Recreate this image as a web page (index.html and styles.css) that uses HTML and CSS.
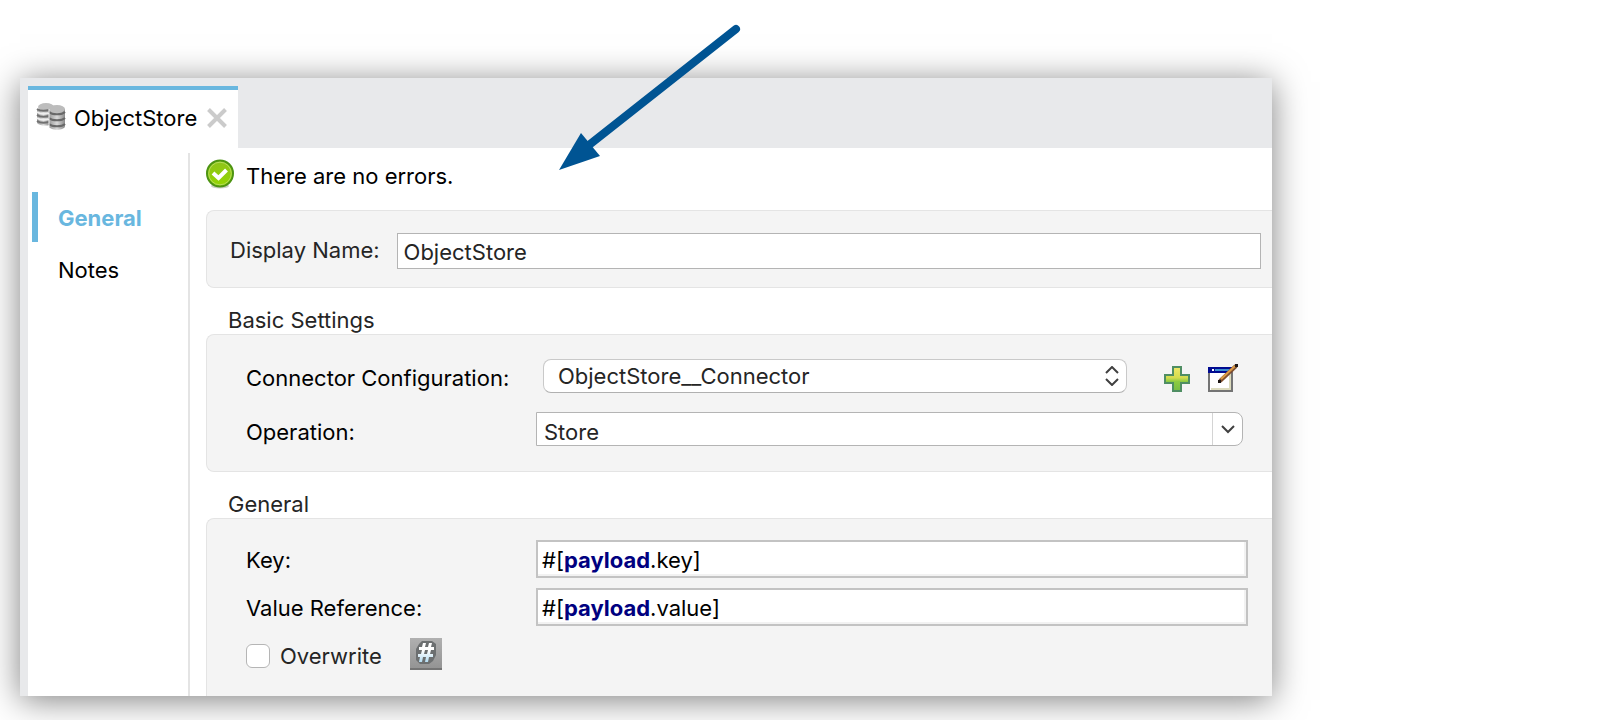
FILE: index.html
```html
<!DOCTYPE html>
<html lang="en">
<head>
<meta charset="utf-8">
<title>ObjectStore</title>
<link rel="stylesheet" href="styles.css">
</head>
<body>
<main class="window">
  <header class="tabs">
    <div class="tab">
      <svg class="tab-icon" viewBox="0 0 30 28" aria-hidden="true">
        <defs>
          <linearGradient id="metal"><stop offset="0" stop-color="#999"/><stop offset=".5" stop-color="#d8d8d8"/><stop offset="1" stop-color="#8a8a8a"/></linearGradient>
        </defs>
        <path d="M1 7v14c3 3 9 3 13 2V7z" fill="url(#metal)"/>
        <ellipse cx="10" cy="5" rx="8" ry="4" fill="#bdbdbd"/>
        <path d="M1 7c3 2 8 2 12 1M1 13c3 2 8 2 12 1M1 19c3 2 8 2 12 1" fill="none" stroke="#707070" stroke-width="2"/>
        <path d="M1 10c3 2 8 2 12 1M1 16c3 2 8 2 12 1" fill="none" stroke="#eee" stroke-width="2"/>
        <path d="M13 7v17c0 5 16 5 16 0V7z" fill="url(#metal)"/>
        <ellipse cx="21" cy="7" rx="8" ry="4" fill="#bcbcbc"/>
        <path d="M13 10c3 3 13 3 16 0M13 16c3 3 13 3 16 0M13 22c3 3 13 3 16 0" fill="none" stroke="#686868" stroke-width="2"/>
        <path d="M13 7v18" stroke="#f4f4f4" stroke-width="1"/>
      </svg>
      <span>ObjectStore</span>
      <button class="close" type="button" aria-label="Close tab">
        <svg viewBox="0 0 20 20" aria-hidden="true"><path d="M1.500 1.500l17 17M18.500 1.500l-17 17" stroke="#cbcbcb" stroke-width="4"/></svg>
      </button>
    </div>
  </header>
  <div class="body">
    <nav class="side">
      <a class="side-link active" href="#general">General</a>
      <a class="side-link" href="#notes">Notes</a>
    </nav>
    <form class="content">
      <div class="status">
        <svg class="status-icon" viewBox="0 0 28 30" aria-hidden="true">
          <defs><linearGradient id="ok" x2="0" y2="1"><stop offset="0" stop-color="#8fc31c"/><stop offset="1" stop-color="#93d600"/></linearGradient></defs>
          <ellipse cx="14" cy="27" rx="9" ry="2.500" fill="#c9cfc4"/>
          <circle cx="14" cy="14.500" r="13" fill="url(#ok)" stroke="#4d9412" stroke-width="2"/>
          <circle cx="14" cy="14.500" r="11.300" fill="none" stroke="#b5dc5c" stroke-width="1"/>
          <path d="M7 14l5.500 5 8-8" fill="none" stroke="#fff" stroke-width="4"/>
        </svg>
        <span>There are no errors.</span>
      </div>

      <section class="panel name-panel">
        <label for="display-name">Display Name:</label>
        <input id="display-name" class="field" type="text" value="ObjectStore">
      </section>

      <h2>Basic Settings</h2>
      <section class="panel basic-panel">
        <div class="row config-row">
          <label for="config">Connector Configuration:</label>
          <div class="config">
            <div class="select-wrap popup">
              <select id="config"><option>ObjectStore__Connector</option></select>
              <svg class="updown" viewBox="0 0 14 20" aria-hidden="true"><path d="M1 7l6-6 6 6M1 13l6 6 6-6"/></svg>
            </div>
            <button class="icon-button" type="button" aria-label="Add configuration">
              <svg width="26" height="26" viewBox="0 0 26 26" aria-hidden="true">
                <defs><linearGradient id="add" x2="0" y2="1"><stop offset="0" stop-color="#f0e868"/><stop offset=".45" stop-color="#d3dc4e"/><stop offset=".6" stop-color="#8dcb42"/><stop offset="1" stop-color="#76bd44"/></linearGradient></defs>
                <path d="M9 1h8v8h8v8h-8v8H9v-8H1V9h8z" fill="url(#add)" stroke="#4f8e63" stroke-width="2"/>
              </svg>
            </button>
            <button class="icon-button edit" type="button" aria-label="Edit configuration">
              <svg width="32" height="30" viewBox="0 0 32 30" aria-hidden="true">
                <path d="M2 5h23v23H2z" fill="#fff" stroke="#747474" stroke-width="2"/>
                <path d="M4 26h19V11" fill="none" stroke="#dcdbbd" stroke-width="2"/>
                <path d="M1 4h24v6H1z" fill="#000a90"/>
                <path d="M8 7h16" stroke="#3d8fd0" stroke-width="2"/>
                <path d="M5 6h2v2H5z" fill="#fff"/>
                <path d="M13 18L29 3" stroke="#805030" stroke-width="4"/>
                <path d="M14 16L28 3" stroke="#dc9c46" stroke-width="2"/>
                <path d="M11 17h3v3h-3zM28 1h3v3h-3z" fill="#1d1715"/>
              </svg>
            </button>
          </div>
        </div>
        <div class="row operation-row">
          <label for="operation">Operation:</label>
          <div class="select-wrap combo">
            <select id="operation"><option>Store</option></select>
            <span class="combo-cap"><svg viewBox="0 0 14 9" aria-hidden="true"><path d="M1 1l6 6 6-6"/></svg></span>
          </div>
        </div>
      </section>

      <h2>General</h2>
      <section class="panel general-panel">
        <div class="row expression-row">
          <span id="key-label">Key:</span>
          <div class="expression" contenteditable="true" role="textbox" aria-labelledby="key-label" spellcheck="false">#[<b>payload</b>.key]</div>
        </div>
        <div class="row expression-row">
          <span id="value-label">Value Reference:</span>
          <div class="expression" contenteditable="true" role="textbox" aria-labelledby="value-label" spellcheck="false">#[<b>payload</b>.value]</div>
        </div>
        <div class="check-row">
          <input id="overwrite" type="checkbox">
          <label for="overwrite">Overwrite</label>
          <button class="hash" type="button" aria-label="Use expression">
            <svg viewBox="0 0 32 32" aria-hidden="true">
              <defs><linearGradient id="sign" x2="0" y2="1"><stop offset=".4" stop-color="#fff"/><stop offset="1" stop-color="#b4dcf2"/></linearGradient></defs>
              <path d="M12 3h10l4 3v11l-3 6-4 3h-9l-4-4V11l3-5z" fill="#6c6f70"/>
              <path d="M13 5h3l-1 4h3l1-4h3l-1 4h3v3h-3l-1 4h3v3h-4l-1 5h-3l1-5h-3l-1 5H9l1-5H8v-3h3l1-4H9V9h3zM15 12l-1 4h3l1-4z" fill="url(#sign)"/>
            </svg>
          </button>
        </div>
      </section>
    </form>
  </div>
  <svg class="arrow" viewBox="0 0 184 148" aria-hidden="true">
    <path d="M30 122L177 6" stroke="#005493" stroke-width="8" stroke-linecap="round"/>
    <path d="M0 147L22 110L41 133z" fill="#005493"/>
  </svg>
</main>
</body>
</html>
```

FILE: styles.css
```css
* {
  box-sizing: border-box;
}

body {
  margin: 0;
  background: #fff;
  color: #000;
  font: 22px/28px Inter, "Liberation Sans", sans-serif;
}

input,
select,
button {
  margin: 0;
  padding: 0;
  border: 0;
  color: inherit;
  font: inherit;
}

button {
  background: none;
}

svg {
  display: block;
}

.window {
  position: relative;
  display: flex;
  flex-direction: column;
  min-height: calc(100vh - 102px);
  margin: 78px 334px 24px 20px;
  padding-left: 8px;
  background: #e8e9eb;
  box-shadow: 0 4px 32px rgba(0, 0, 0, 0.5);
}

.tabs {
  display: flex;
  height: 70px;
  padding-top: 8px;
}

.tab {
  display: flex;
  align-items: center;
  padding: 0 11px 2px 8px;
  border-top: 4px solid #69b7df;
  background: #fff;
}

.tab-icon {
  width: 30px;
  height: 28px;
  margin: 0 8px 4px 0;
}

.close {
  margin-left: 10px;
}

.close svg {
  width: 20px;
  height: 20px;
}

.body {
  display: flex;
  flex: 1;
  padding-top: 5px;
  background: #fff;
}

.side {
  display: flex;
  flex-direction: column;
  width: 162px;
  padding: 39px 0 0 4px;
  border-right: 2px solid #e4e4e4;
}

.side-link {
  padding: 14px 0 12px 26px;
  color: #000;
  text-decoration: none;
}

.side-link.active {
  padding: 12px 0 10px 20px;
  border-left: 6px solid #69b7df;
  color: #69b7df;
  font-weight: 700;
}

.content {
  display: flex;
  flex: 1;
  flex-direction: column;
  min-width: 0;
  padding: 6px 0 0 16px;
}

.status {
  display: flex;
  gap: 12px;
}

.status-icon {
  width: 28px;
  height: 30px;
}

.status span {
  padding-top: 3px;
}

.panel {
  border: 1px solid #e4e4e4;
  border-right: 0;
  border-radius: 8px 0 0 8px;
  background: #f4f4f4;
}

.name-panel {
  display: flex;
  gap: 17px;
  margin-top: 20px;
  padding: 22px 11px 18px 23px;
  color: #252525;
}

.name-panel label {
  padding-top: 3px;
}

.field {
  flex: 1;
  min-width: 0;
  height: 36px;
  padding: 1px 6px 0;
  border: 1px solid #b4b4b4;
  background: #fff;
}

h2 {
  margin: 18px 0 0;
  padding-left: 22px;
  color: #252525;
  font-size: 22px;
  font-weight: 400;
  line-height: 28px;
}

.row {
  display: grid;
  grid-template-columns: 290px 1fr;
}

.basic-panel {
  padding: 24px 29px 25px 39px;
}

.config-row label {
  padding-top: 5px;
}

.config {
  display: flex;
  align-items: flex-start;
  padding: 0 4px 0 7px;
}

.select-wrap {
  position: relative;
  display: flex;
  color: #252525;
}

select {
  flex: 1;
  min-width: 0;
  appearance: none;
  background: transparent;
}

.popup {
  flex: 1;
  height: 34px;
  border: 1px solid #c9c9c9;
  border-bottom-color: #b0b0b0;
  border-radius: 8px;
  background: #fff;
}

.popup select {
  padding: 0 32px 0 14px;
}

.select-wrap svg {
  fill: none;
  stroke: #404040;
  stroke-width: 2;
}

.updown {
  position: absolute;
  top: 6px;
  right: 7px;
  width: 14px;
  height: 20px;
  pointer-events: none;
}

.icon-button {
  margin: 7px 0 0 37px;
}

.icon-button.edit {
  margin: 4px 0 0 17px;
}

.operation-row {
  margin-top: 19px;
}

.operation-row label {
  padding-top: 6px;
}

.combo {
  height: 34px;
  border: 1px solid #b4b4b4;
  border-radius: 0 8px 8px 0;
  background: #fff;
}

.combo select {
  padding: 5px 36px 0 7px;
}

.combo-cap {
  position: absolute;
  top: 0;
  right: 0;
  bottom: 0;
  display: grid;
  width: 30px;
  border-left: 1px solid #d4d4d4;
  pointer-events: none;
  place-items: center;
}

.combo-cap svg {
  width: 14px;
  height: 9px;
}

.general-panel {
  flex: 1;
  padding: 21px 24px 24px 39px;
  border-bottom: 0;
  border-radius: 8px 0 0;
}

.expression-row + .expression-row {
  margin-top: 10px;
}

.expression-row > span {
  padding-top: 6px;
}

.expression {
  min-height: 38px;
  padding: 4px 4px 2px;
  border: 2px solid #c3c3c3;
  background: #fff;
  box-shadow: inset -2px -2px #f2f2f2;
}

.expression b {
  color: #000080;
}

.check-row {
  display: flex;
  align-items: flex-start;
  margin-top: 12px;
  color: #252525;
}

.check-row input {
  width: 24px;
  height: 24px;
  margin: 6px 10px 0 0;
  border: 1px solid #b5b5b5;
  border-radius: 6px;
  appearance: none;
  background: #fff;
}

.check-row label {
  padding-top: 4px;
}

.check-row input:checked {
  background: #69b7df;
}

.hash {
  width: 32px;
  height: 32px;
  margin-left: 28px;
  border-bottom: 2px solid #747474;
  background: linear-gradient(#b0b0b0, #949494);
}

.arrow {
  position: absolute;
  top: -55px;
  left: 539px;
  width: 184px;
  height: 148px;
}
```
